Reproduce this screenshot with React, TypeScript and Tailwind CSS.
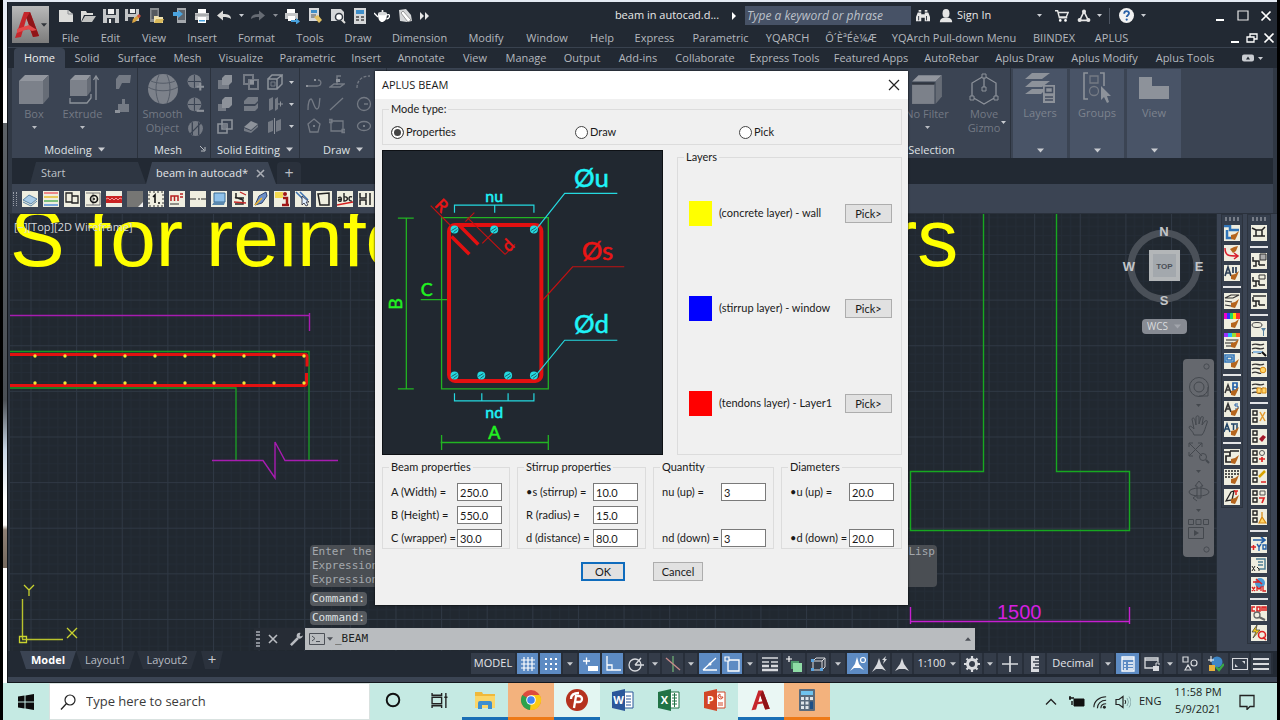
import React from "react";
import type { ReactNode } from "react";

const UI = "font-['Open_Sans','Noto_Sans',sans-serif]";
const FORM = "font-['Lato','Liberation_Sans',sans-serif]";

type Item = [string, string];

const menus: Item[] = [
  ["File", "w-[39px]"], ["Edit", "w-[41px]"], ["View", "w-[46px]"], ["Insert", "w-[50px]"],
  ["Format", "w-[59px]"], ["Tools", "w-[48px]"], ["Draw", "w-[48px]"], ["Dimension", "w-[75px]"],
  ["Modify", "w-[58px]"], ["Window", "w-[64px]"], ["Help", "w-[46px]"], ["Express", "w-[59px]"],
  ["Parametric", "w-[73px]"], ["YQARCH", "w-[61px]"], ["Ô´ÈªÉè¼Æ", "w-[66px]"],
  ["YQArch Pull-down Menu", "w-[140px]"], ["BIINDEX", "w-[60px]"], ["APLUS", "w-[55px]"],
];

const ribbonTabs: Item[] = [
  ["Home", "w-[51px]"], ["Solid", "w-[44px]"], ["Surface", "w-[56px]"], ["Mesh", "w-[45px]"],
  ["Visualize", "w-[62px]"], ["Parametric", "w-[71px]"], ["Insert", "w-[46px]"], ["Annotate", "w-[64px]"],
  ["View", "w-[44px]"], ["Manage", "w-[58px]"], ["Output", "w-[54px]"], ["Add-ins", "w-[58px]"],
  ["Collaborate", "w-[76px]"], ["Express Tools", "w-[83px]"], ["Featured Apps", "w-[90px]"],
  ["AutoRebar", "w-[71px]"], ["Aplus Draw", "w-[75px]"], ["Aplus Modify", "w-[85px]"], ["Aplus Tools", "w-[76px]"],
];

function Svg({ s = 16, vb = "0 0 16 16", children, className = "" }: { s?: number; vb?: string; children: ReactNode; className?: string }) {
  return (
    <svg width={s} height={s} viewBox={vb} fill="none" className={"shrink-0 " + className} aria-hidden="true">
      {children}
    </svg>
  );
}

function Tri({ className = "text-[#c9ccd1]", s = 6 }: { className?: string; s?: number }) {
  return (
    <svg width={s} height={s} viewBox="0 0 6 6" className={"shrink-0 " + className} aria-hidden="true">
      <path d="M0 1.2h6L3 4.8z" fill="currentColor" />
    </svg>
  );
}

function Cell({ w, label, children, className = "" }: { w: string; label: string; children: ReactNode; className?: string }) {
  return (
    <button type="button" aria-label={label} className={"flex h-full shrink-0 items-center justify-center " + w + " " + className}>
      {children}
    </button>
  );
}

const L = "#dcdcda";

const quick: [string, string, ReactNode][] = [
  ["New", "w-[22px]", <Svg><path d="M1 2h9l5 4v8H1z" fill={L} /><path d="M10 2v4h5" stroke="#8a8d92" /></Svg>],
  ["Open", "w-[22px]", <Svg><path d="M1 3h5l1 2h6v2H4L1 14z" fill={L} /><path d="M5 8h11l-4 6H1.500z" fill="#c2c3c2" /></Svg>],
  ["Save", "w-[23px]", <Svg><path d="M0 1h16v14H0z" fill="#c4c6c8" /><path d="M3 1h10v6H3zM4 10h8v5H4z" fill="#30363f" /><path d="M5 1h6v5H5zM6 11h2v4H6z" fill="#eee" /></Svg>],
  ["Save as", "w-[22px]", <Svg><path d="M0 1h14v12H0z" fill="#c4c6c8" /><path d="M3 1h8v5H3zM3 9h6v4H3z" fill="#30363f" /><path d="M5 1h5v4H5z" fill="#eee" /><path d="M7 15l1-4 5-4 2 2-5 5z" fill="#d9a441" /><path d="M12 8l2-2 2 2-2 2z" fill="#c94f3e" /></Svg>],
  ["Open from web", "w-[24px]", <Svg><path d="M2 0h9v14H2z" fill="#888c90" /><path d="M3.500 2h6v9h-6z" fill="#555a60" /><path d="M6 8h4l1 1h4v6H6z" fill="#f1e3b0" /><path d="M8 11h8l-2 4H6z" fill="#d9b95b" /></Svg>],
  ["Save to web", "w-[23px]", <Svg><path d="M5 0h9v15H5z" fill="#a4a8ad" /><path d="M6 2h7v10H6z" fill="#5f656d" /><path d="M1 2h5V0l5 4-5 4V6H1z" fill="#4aa3df" transform="translate(0 2)" /></Svg>],
  ["Plot", "w-[22px]", <Svg><path d="M4 1h8v4H4z" fill="#fff" /><path d="M1 5h14v7H1z" fill="#c5c7c9" /><path d="M4 9h8v6H4z" fill="#fff" /><path d="M5 12h6v1.500H5z" fill="#4aa3df" /><path d="M1 7h14" stroke="#8c8f93" /></Svg>],
  ["Undo", "w-[22px]", <Svg><path d="M1 7.500l6-5V6c5 0 8 1 8 5-2-1.500-4-2-8-2v3.500z" fill={L} /></Svg>],
  ["Undo list", "w-[12px]", <Tri s={5} />],
  ["Redo", "w-[22px]", <Svg><path d="M15 7.500l-6-5V6c-5 0-8 1-8 5 2-1.500 4-2 8-2v3.500z" fill="#666b73" /></Svg>],
  ["Redo list", "w-[12px]", <Tri s={5} className="text-[#8a8e95]" />],
  ["Batch plot", "w-[22px]", <Svg><path d="M3 1h8v4H3z" fill="#fff" /><path d="M1 5h13v6H1z" fill="#c5c7c9" /><path d="M4 8h7v5H4z" fill="#fff" /><path d="M7 12h5v-2l4 3.500-4 3V14H7z" fill="#4aa3df" /></Svg>],
  ["Match properties", "w-[23px]", <Svg><path d="M2 0h10v13H2z" fill="#d5d7d9" /><path d="M4 2h6v3H4z" fill="#3f8ec9" /><path d="M4 7h5M4 9h5" stroke="#555" /><path d="M7 9l4-2 4 5-3 3z" fill="#e2c063" /></Svg>],
  ["Preview", "w-[23px]", <Svg><path d="M1 1h10l3 3v9H1z" fill="#d5d7d9" /><circle cx="9" cy="9" r="3.500" fill="#fff" stroke="#333a44" strokeWidth="1.500" /><path d="M12 12l3 3" stroke={L} strokeWidth="2" /></Svg>],
  ["Sheet set", "w-[22px]", <Svg><path d="M2 0h12v16H2z" fill="#d5d7d9" /><path d="M4 2h8v4H4z" fill="#3f8ec9" /><path d="M4 9h3M9 9h3M4 12h3M9 12h3" stroke="#444" strokeWidth="1.500" /></Svg>],
  ["Render", "w-[22px]", <Svg><path d="M4 6c0 6 2 8 4 8s5-2 5-8z" fill="#fff" /><ellipse cx="8.500" cy="5.500" rx="4.500" ry="1.800" fill="#d5d7d9" /><path d="M4 9L0 5M12.500 7c4-2 4 3 0 4" stroke="#fff" strokeWidth="1.300" /><circle cx="8.500" cy="3" r="1" fill="#fff" /></Svg>],
  ["Script", "w-[23px]", <Svg><path d="M2 2l7-1 5 6 1 6-5 1-7-1z" fill="#d5d7d9" /><path d="M6 3l8 9-3 2-7-9z" fill="#fff" stroke="#777" strokeWidth=".7" /></Svg>],
  ["More", "w-[17px]", <Svg s={10} vb="0 0 10 10"><path d="M0 1l4 4-4 4zM5 1l4 4-4 4z" fill="#e6e6e6" /></Svg>],
];

function WinControls({ small = false }: { small?: boolean }) {
  const w = small ? "w-[17px]" : "w-[23px]";
  return (
    <>
      <Cell w={w} label="Minimize"><Svg s={12} vb="0 0 12 12"><path d="M2 10h8" stroke="#fff" strokeWidth="2" /></Svg></Cell>
      <Cell w={w} label="Restore">
        <Svg s={12} vb="0 0 12 12">
          {small ? <path d="M1 5h7v5H1zM4 5V2h7v5H8" stroke="#fff" strokeWidth="1.300" /> : <path d="M1 1h10v9H1z" stroke="#e6e6e6" strokeWidth="1.200" />}
        </Svg>
      </Cell>
      <Cell w={w} label="Close"><Svg s={12} vb="0 0 12 12"><path d="M1.500 1.500l9 9m0-9l-9 9" stroke="#fff" strokeWidth="1.700" /></Svg></Cell>
    </>
  );
}

function Header() {
  return (
    <header className="flex h-[46px] border-b border-[#39424f] bg-[#222933]">
      <button type="button" aria-label="Application menu" className="mt-1 ml-1 flex h-[37px] w-[37px] shrink-0 items-center justify-between bg-linear-to-b from-[#b9b9b9] to-[#7c7c7c] pr-0.5 pl-0.5">
        <svg width="27" height="30" viewBox="0 0 27 30" aria-hidden="true">
          <path d="M10 2h6l9 24-6 1-3-8-7 1-2 7-6 1z" fill="#c5262b" />
          <path d="M12.500 8l3 8-5.500 1z" fill="#a5a5a5" />
          <path d="M16 2l9 24-6 1L12.500 8z" fill="#8f1418" />
          <path d="M3 19l12-4 8 5-5 1-4-2-11 4z" fill="#e4494a" />
        </svg>
        <Tri className="text-[#30343a]" />
      </button>
      <div className="flex min-w-0 flex-1 flex-col pl-0.5">
        <div className="flex h-[26px] items-center pt-px pl-1">
          {quick.map(([label, w, icon]) => <Cell key={label} w={w} label={label}>{icon}</Cell>)}
          <div className="flex-1" />
          <h1 className="w-[112px] text-center text-[11px] whitespace-nowrap text-[#e8e8e8]">beam in autocad.d...</h1>
          <Cell w="w-[22px]" label="Expand"><Svg s={8} vb="0 0 8 8"><path d="M2 0l4 4-4 4z" fill="#fff" /></Svg></Cell>
          <input aria-label="Search help" placeholder="Type a keyword or phrase" className="h-[19px] w-[166px] bg-[#475266] px-0.5 text-[12px] text-white italic outline-none placeholder:text-[#bcc1c9]" />
          <Cell w="w-[24px]" label="Find"><Svg s={14}><path d="M2 4h4v10H0V9zM10 4h4l2 5v5h-6zM6 6h4v4H6zM3 1h3v2H3zM10 1h3v2h-3z" fill="#e6e6e6" /><path d="M3 8v5M12 8v5" stroke="#222933" /></Svg></Cell>
          <button type="button" className="flex w-[96px] items-center gap-1 pl-1 text-[11px] text-[#e8e8e8]">
            <Svg s={14}><ellipse cx="8" cy="5" rx="4" ry="5" fill="#e6e6e6" /><path d="M1 15c0-4 3-5 5-5h4c2 0 5 1 5 5z" fill="#e6e6e6" /></Svg>
            Sign In
          </button>
          <Cell w="w-[16px]" label="Account menu"><Tri s={5} /></Cell>
          <div className="w-1" />
          <Cell w="w-[22px]" label="Store"><Svg s={14}><path d="M0 2h3l2 8h9M4 4h11l-2 5H5" stroke="#e6e6e6" strokeWidth="1.600" /><circle cx="6" cy="13" r="1.500" fill="#fff" /><circle cx="12" cy="13" r="1.500" fill="#fff" /></Svg></Cell>
          <Cell w="w-[22px]" label="Autodesk apps"><Svg s={14}><path d="M8 3L3 13h10z" stroke="#e6e6e6" strokeWidth="1.800" /><circle cx="8" cy="3" r="2.300" fill="#e6e6e6" /><circle cx="3" cy="12.500" r="2.300" fill="#e6e6e6" /><circle cx="13" cy="12.500" r="2.300" fill="#e6e6e6" /></Svg></Cell>
          <Cell w="w-[8px]" label="Apps menu"><Tri s={5} /></Cell>
          <div className="mr-1 ml-1.5 h-4 w-px bg-[#4c5461]" />
          <Cell w="w-[24px]" label="Help"><Svg s={15}><circle cx="8" cy="8" r="8" fill="#f2f2f2" /><path d="M5.500 6c0-3.500 5.200-3.300 5.200-.3 0 2-2.500 2-2.500 4" stroke="#2a61a8" strokeWidth="1.900" /><circle cx="8.200" cy="12.300" r="1.200" fill="#2a61a8" /></Svg></Cell>
          <Cell w="w-[11px]" label="Help menu"><Tri s={5} /></Cell>
          <div className="w-[59px]" />
          <WinControls />
        </div>
        <nav className="flex h-[19px] items-center">
          {menus.map(([m, w]) => (
            <button key={m} type="button" className={"shrink-0 text-center text-[11px] leading-[18px] whitespace-nowrap text-[#b4b8be] " + w}>{m}</button>
          ))}
          <div className="flex-1" />
          <WinControls small />
        </nav>
      </div>
    </header>
  );
}

const G = "#747a84";
const D = "#8d929a";

const solidIcons: ReactNode[] = [
  <><path d="M1 6h6v4h5v5H1z" fill={G} /><path d="M5 4l3-3h7v7l-3 3H5z" fill={D} /></>,
  <><path d="M1 1h9v9H1zM6 6h9v9H6z" stroke={G} strokeWidth="2" /><path d="M7 6h4v4H7z" fill={D} /></>,
  <><path d="M1 5h9v10H1zM1 5l4-4h10l-5 4M15 1v9l-5 5" stroke={D} strokeWidth="1.500" /><path d="M4 8h4v4H4z" stroke={G} /></>,
  <><path d="M1 8h8v7H1z" fill={G} /><path d="M5 4l3-3h7v8l-3 3H5z" fill={D} /></>,
  <><path d="M1 5l4-4h10v4l-3 3H1zM1 10h11l3-3v5l-3 3H1z" fill={G} /></>,
  <><path d="M2 3l4-2v12l-4 2zM8 3l3-2v12l-3 2z" fill={G} /><path d="M11 8h5M13.500 5.500v5" stroke={D} /></>,
  <><path d="M1 6h9v9H1zM5 2h10v9H5z" stroke={D} strokeWidth="1.600" /><path d="M6 6h4v4H6z" fill={G} /></>,
  <><path d="M1 9l7-6 7 3-7 6z" fill={D} /><path d="M1 10v3l7 2 7-6V7l-7 6z" fill={G} /></>,
  <><path d="M1 4l5-2v11l-5 2zM9 3l5-2v11l-5 2z" fill={G} /><path d="M7.500 0v16" stroke={D} /></>,
];

const drawIcons: ReactNode[] = [
  <><path d="M1 12h10c5 0 5-6 1-6" stroke={G} strokeWidth="1.300" /><path d="M0 11h2v2H0zM8 5h2v2H8z" fill={D} /></>,
  <><path d="M1 13l4-3h10l-4 3zM8 11V2h4" stroke={G} strokeWidth="1.500" /><path d="M7 5h4v3H7z" fill={D} /></>,
  <path d="M1 14C1 6 6 2 14 2" stroke={G} strokeWidth="1.300" strokeDasharray="3 1.500" />,
  <path d="M2 14C2 8 3 3 5 3s3 10 6 10 2-7 3-11" stroke={G} strokeWidth="1.300" />,
  <path d="M1 14L14 2" stroke={G} strokeWidth="1.300" />,
  <><circle cx="8" cy="8" r="6.500" stroke={G} strokeWidth="1.300" /><path d="M8 8h4" stroke={D} /></>,
  <><path d="M8 1l6 5-2 8H4L2 6z" stroke={G} strokeWidth="1.300" /><circle cx="8" cy="8" r="1" fill={D} /></>,
  <path d="M2 3h12v10H2zM0 1.500h3v3H0zM13 11.500h3v3h-3z" stroke={G} strokeWidth="1.300" />,
  <><ellipse cx="8" cy="8" rx="6.500" ry="4.500" stroke={G} strokeWidth="1.300" /><circle cx="8" cy="8" r="1" fill={D} /></>,
];

function Panel({ title, w, arrow = true, mark = false, children }: { title: string; w: string; arrow?: boolean; mark?: boolean; children: ReactNode }) {
  return (
    <section className={"relative flex h-full shrink-0 flex-col border-r border-[#2b323d] " + w}>
      <div className="flex min-h-0 flex-1 items-start">{children}</div>
      <h2 className={"flex h-[17px] items-center justify-center gap-1.5 text-[11px] leading-[15px] whitespace-nowrap text-[#dfe1e4] " + (mark ? "pr-3" : "")}>
        {title}{arrow && <Tri s={7} />}
      </h2>
      {mark && <Svg s={6} vb="0 0 6 6" className="absolute right-1 bottom-1.5"><path d="M0 0l4 4M5 1v4H1" stroke="#b9bcc2" /></Svg>}
    </section>
  );
}

function BigTool({ label, w, icon, arrow = true }: { label: string; w: string; icon: ReactNode; arrow?: boolean }) {
  return (
    <button type="button" className={"flex shrink-0 flex-col items-center pt-[5px] text-[11px] leading-[14px] text-[#737984] " + w}>
      {icon}
      <span className="mt-0.5">{label}</span>
      {arrow && <Tri className="mt-1 text-[#b9bcc2]" s={5} />}
    </button>
  );
}

function Ribbon() {
  return (
    <>
      <nav className="flex h-5 items-center bg-[#222933] pl-1.5" role="tablist">
        {ribbonTabs.map(([t, w], i) => (
          <button key={t} type="button" role="tab" aria-selected={i === 0}
            className={"h-full shrink-0 text-center text-[11px] whitespace-nowrap " + w + (i === 0 ? " rounded-t-sm bg-[#3b4453] text-[#f0f0f0]" : " text-[#b4b8be]")}>
            {t}
          </button>
        ))}
        <div className="flex-1" />
        <Cell w="w-[34px]" label="Ribbon options" className="mr-2 gap-1"><Svg s={12} vb="0 0 12 12"><rect y="2.500" width="12" height="7" rx="2" fill="#c9ccd1" /><path d="M4 7.500l2-3 2 3z" fill="#222933" /></Svg><Tri s={5} /></Cell>
      </nav>
      <div className="mr-1 ml-1 flex h-[90px] bg-[#3b4453]">
        <Panel title="Modeling" w="w-[126px]">
          <BigTool label="Box" w="w-[44px]" icon={<Svg s={32} vb="0 0 32 32"><path d="M1 8l6-6h24l-6 6z" fill="#92969e" /><path d="M1 8h24v23H1z" fill="#7c818a" /><path d="M25 8l6-6v22l-6 7z" fill="#666c76" /></Svg>} />
          <BigTool label="Extrude" w="w-[53px]" icon={<Svg s={32} vb="0 0 32 32"><path d="M3 7l5-5h16l-4 5z" fill="#92969e" /><path d="M3 7h17v16H3z" fill="#7c818a" /><path d="M20 7l4-5v16l-4 5z" fill="#666c76" /><path d="M3 25v5h17l4-5v-4M29 27V4M26.500 7L29 3l2.500 4" stroke={D} strokeWidth="1.300" /></Svg>} />
          <div className="flex flex-col gap-2 pt-1.5 pl-1.5">
            <Svg s={16}><path d="M1 5l3-4h12l-1 8h-8l-3 6H1z" fill={G} /></Svg>
            <Svg s={16}><path d="M3 6h11v8H3zM7 1h3v5H7z" fill={G} /><path d="M0 12h5v3H0z" fill={D} /></Svg>
          </div>
        </Panel>
        <Panel title="Mesh" w="w-[73px]" arrow={false} mark>
          <BigTool label="Smooth Object" w="w-[49px]" arrow={false} icon={<Svg s={32} vb="0 0 32 32"><circle cx="16" cy="16" r="15" fill="#7c818a" /><path d="M1 14c8 5 22 5 30 0M4 8c6 3 18 3 24 0M12 2c-4 8-4 20 0 28M20 2c4 8 4 20 0 28" stroke="#555c68" /></Svg>} />
          <div className="flex flex-col gap-1.5 pt-1.5">
            <Svg s={17}><circle cx="7" cy="7" r="6.500" fill={G} /><path d="M1 7h12M7 1v12" stroke="#3b4453" /><path d="M9 12h7M12.500 8.500v7" stroke={D} strokeWidth="2" /></Svg>
            <Svg s={17}><circle cx="7" cy="7" r="6.500" fill={G} /><path d="M1 7h12M7 1v12" stroke="#3b4453" /><path d="M9 13h7" stroke={D} strokeWidth="2" /></Svg>
            <Svg s={17}><circle cx="8" cy="8" r="7" fill={G} /><path d="M2 14L14 2M5 2v12M11 2v12" stroke="#3b4453" strokeWidth="1.300" /></Svg>
          </div>
        </Panel>
        <Panel title="Solid Editing" w="w-[89px]">
          <div className="grid grid-cols-[26px_24px_22px_10px] items-center gap-y-1.5 pt-1.5 pl-1.5">
            {[0, 1, 2].map((r) => (
              <React.Fragment key={r}>
                {[0, 1, 2].map((c) => <Svg key={c} s={16}>{solidIcons[r * 3 + c]}</Svg>)}
                <Tri s={5} />
              </React.Fragment>
            ))}
          </div>
        </Panel>
        <Panel title="Draw" w="w-[87px]">
          <div className="grid grid-cols-[23px_27px_22px] items-center gap-y-1.5 pt-1.5 pl-1.5">
            {drawIcons.map((d, i) => <Svg key={i} s={16}>{d}</Svg>)}
          </div>
        </Panel>
        <div className="flex-1" />
        <Panel title="Selection" w="w-[158px]" arrow={false}>
          <div className="w-[48px]" />
          <BigTool label="No Filter" w="w-[52px]" icon={<Svg s={32} vb="0 0 30 30"><path d="M1 8l6-6h22l-6 6z" fill="#92969e" /><path d="M1 10h21v19H1z" fill="#7c818a" /><path d="M23 8l6-6v20l-6 7z" fill="#666c76" /><path d="M1 10h21" stroke="#30363f" strokeWidth="2" /></Svg>} />
          <BigTool label="Move Gizmo" w="w-[46px] ml-2" arrow={false} icon={<Svg s={32} vb="0 0 32 32"><path d="M16 3l12 7v14l-12 7-12-7V10zM16 3v13" stroke={D} strokeWidth="1.300" /><path d="M14 1h4v4h-4zM2 23h4v4H2zM26 23h4v4h-4zM14 14h4v4h-4z" fill="#3b4453" stroke={D} /></Svg>} />
          <Tri s={5} className="absolute top-[52px] right-1 text-[#c9ccd1]" />
        </Panel>
        <div className="flex gap-[3px] pt-px pr-px pl-0.5">
          <FlatPanel label="Layers" icon={<Svg s={32} vb="0 0 32 32"><path d="M8 1h18l-8 6H1zM8 9h18l-8 6H1zM8 17h14l-5 5H1z" fill={D} /><path d="M19 13h12v18H19z" fill="#8d929a" /><path d="M21.500 15.500h7v5h-7zM21 25h8M21 28h8" stroke="#444e60" strokeWidth="1.500" /></Svg>} />
          <FlatPanel label="Groups" icon={<Svg s={32} vb="0 0 32 32"><path d="M7 1H3v26h4M19 1h4v13" stroke={D} strokeWidth="1.600" /><path d="M9 4h8v7H9z" stroke={G} strokeWidth="1.300" /><circle cx="13" cy="19" r="4.500" stroke={G} strokeWidth="1.300" /><path d="M20 14v14l3-3 3 6 2-1-2-6h4z" fill={D} /></Svg>} />
          <FlatPanel label="View" icon={<Svg s={32} vb="0 0 32 32"><path d="M1 5h13v9h17v13H1z" fill={D} /></Svg>} />
        </div>
        <div className="w-[91px]" />
      </div>
    </>
  );
}

function FlatPanel({ label, icon }: { label: string; icon: ReactNode }) {
  return (
    <button type="button" className="flex w-[54px] flex-col items-center bg-[#495467] pt-[3px] text-[11px] leading-[14px] text-[#7d838e]">
      {icon}
      <span className="mt-0.5">{label}</span>
      <Tri className="mt-auto mb-1 text-[#c9ccd1]" s={7} />
    </button>
  );
}

const toolbarIcons: ReactNode[] = [
  <><path d="M1 9l6-5 8 4-6 5z" fill="#a9cbe6" stroke="#5d86a8" /><path d="M1 11l8 4 6-5" stroke="#5d86a8" /></>,
  <><path d="M1 2h14" stroke="#e88" strokeWidth="2" /><path d="M1 6h14" stroke="#e8c95a" strokeWidth="2" /><path d="M1 10h14" stroke="#7cc17c" strokeWidth="2" /><path d="M1 14h14" stroke="#79a7dc" strokeWidth="2" /></>,
  <><path d="M2 2h6v9H2zM8 5h6v7H8z" stroke="#222" strokeWidth="1.300" /></>,
  <><path d="M1 2h7v12M8 2h7v12H1" stroke="#777" /><circle cx="9" cy="8" r="3.500" stroke="#111" strokeWidth="1.600" /><circle cx="9" cy="8" r="1" fill="#111" /></>,
  <><path d="M0 5h16v7H0z" fill="#c92323" /><path d="M0 8l2-1 2 2 2-2 2 2 2-2 2 2 2-2 2 1" stroke="#f19a9a" /></>,
  <><path d="M0 0h16v16H0z" fill="#767674" /><path d="M11 16l5-5v5z" fill="#eee" /></>,
  <><path d="M1 1h14v14H1z" stroke="#333" strokeDasharray="2 2" /><path d="M5 6l2-2v8M10 12h2" stroke="#111" strokeWidth="1.600" /></>,
  <><path d="M2 10V5h7v5M5.500 5v5M11 3h3M11 6h3" stroke="#b62020" strokeWidth="1.500" /><path d="M1 13h9" stroke="#333" /></>,
  <path d="M0 8h6M8 8h2M11 8h5" stroke="#222" strokeWidth="1.200" />,
  <><path d="M3 2h11v9H3z" fill="#8fc1ea" stroke="#3b6c96" /><path d="M1 14l2-3h11l-1 3z" fill="#5a87ad" /></>,
  <><path d="M4 2v5h8M3 6l8 3v4H3" stroke="#222" strokeWidth="1.500" /><path d="M2 11l12 1M8 1l6 3" stroke="#c62828" strokeWidth="1.300" /></>,
  <><path d="M2 14L6 5l7-4 1 4-5 7z" fill="#6d8fc7" stroke="#2d4370" /><path d="M2 14l7-7" stroke="#f0b429" strokeWidth="1.600" /></>,
  <><path d="M1 1h8v6H1z" fill="#f3d84f" /><path d="M9 7h4v7M8 14h7" stroke="#a01515" strokeWidth="2.500" /><circle cx="11" cy="3" r="2" fill="#a01515" /></>,
  <><path d="M1 1l9 9M5 1l8 8" stroke="#3a6fb0" strokeWidth="1.500" /><path d="M7 5v9l2-2 2 3 2-1-2-3h3z" fill="#dfeeff" stroke="#223" strokeWidth=".8" /></>,
  <path d="M2 3l11-1v12H4z" stroke="#222" strokeWidth="1.500" />,
  <><path d="M1 7c3-2 4 0 3 3-3 1-4-2 0-2m3-6v8c5 0 4-5 0-4m8 0c-4-2-4 5 0 4" stroke="#222" strokeWidth="1.400" /><path d="M0 14l16-3" stroke="#d42020" strokeWidth="1.600" /></>,
  <path d="M2 2v5h6V2M2 14V9h6v5M12 2v12" stroke="#222" strokeWidth="1.500" />,
];

function Tile({ children }: { children: ReactNode }) {
  return (
    <svg width="16" height="16" viewBox="0 0 16 16" fill="none" className="shrink-0 bg-[#efeee0]" aria-hidden="true">{children}</svg>
  );
}

function DocumentBars() {
  return (
    <>
      <div className="mr-1 ml-1 flex h-[26px] items-end bg-[#222933] pl-[18px]">
        <button type="button" className="h-[22px] w-[116px] bg-[#2e3642] pl-[11px] text-left text-[11px] text-[#bfc3c9] [clip-path:polygon(6px_0,108px_0,116px_100%,0_100%)]">Start</button>
        <button type="button" className="flex h-[22px] w-[131px] items-center gap-2 bg-[#3b4453] pl-2.5 text-[11px] whitespace-nowrap text-[#e3e5e8] [clip-path:polygon(6px_0,122px_0,130px_100%,0_100%)]">
          beam in autocad*
          <Svg s={9} vb="0 0 9 9"><path d="M1 1l7 7m0-7L1 8" stroke="#a9adb4" strokeWidth="1.600" /></Svg>
        </button>
        <button type="button" className="h-[22px] w-[24px] rounded-t bg-[#2a313c] text-[16px] leading-5 text-[#b9bdc4]">+</button>
      </div>
      <div className="mr-1 ml-1 flex h-[29px] items-center gap-[5px] bg-[#3b4453] pl-px">
        <span className="h-3.5 w-1 border-x border-dotted border-[#9a9fa8]" />
        {toolbarIcons.map((d, i) => (
          <Tile key={i}>{d}</Tile>
        ))}
      </div>
    </>
  );
}

const bars = [35, 65, 95, 125, 155, 185, 214, 244, 274, 304];

function Drawing() {
  return (
    <svg className="absolute inset-0 h-full w-full" aria-hidden="true">
      <defs>
        <pattern id="grid" width="45.62" height="45.62" patternUnits="userSpaceOnUse" x="30.5" y="254">
          <path d="M9.100 0v46M18.200 0v46M27.300 0v46M36.400 0v46M0 9.100h46M0 18.200h46M0 27.300h46M0 36.400h46" stroke="#242c36" />
          <path d="M0.500 0v46M0 0.500h46" stroke="#2f3844" />
        </pattern>
      </defs>
      <g transform="translate(-10 -214)" fill="none">
        <rect x="0" y="200" width="3000" height="2000" fill="url(#grid)" />
        <text x="10" y="266" fontSize="82" fill="#ffff00" className="font-['Liberation_Sans',sans-serif]">S for reinfo</text>
        <text x="890" y="266" fontSize="82" fill="#ffff00" className="font-['Liberation_Sans',sans-serif]">rs</text>
        <text x="14" y="231" fontSize="11" fill="#d5d8dc" className="font-['Open_Sans',sans-serif]">[−][Top][2D Wireframe]</text>
        <path d="M10 315.500h299M309.500 313v18" stroke="#a71cb0" strokeWidth="1.400" />
        <path d="M10 351.500h299v108.500M10 388h226v72" stroke="#1c9a25" strokeWidth="1.400" />
        <path d="M10 354.500h295q2 0 2 2v10M306.500 373v10q0 2.500-2.500 2.500H10" stroke="#e31111" strokeWidth="3" />
        {bars.map((x) => <g key={x} fill="#f4e63a"><circle cx={x} cy="356" r="1.700" /><circle cx={x} cy="383" r="1.700" /></g>)}
        <path d="M212 460.500h51l12 17.500v-36l10 18.500h53" stroke="#a71cb0" strokeWidth="1.400" />
        <path d="M983.500 200v271.500h-73v59h219v-59h-73V200" stroke="#17a820" strokeWidth="1.400" />
        <path d="M910.500 607v17M1129.500 607v17M910 621.500h220" stroke="#c61fd0" strokeWidth="1.400" />
        <text x="997" y="619" fontSize="20" fill="#d61fe0" className="font-['Liberation_Sans',sans-serif]">1500</text>
        <path d="M22.500 639V599M22 639.500h41" stroke="#b9c22c" strokeWidth="1.400" />
        <path d="M19.500 636.500h7v6h-7zM24 585l5 5 5-5M29 590v6M67 628l10 10m0-10l-10 10" stroke="#c9d32f" strokeWidth="1.300" />
      </g>
    </svg>
  );
}

function ViewCube() {
  return (
    <div className="absolute top-[9px] right-[11px] flex flex-col items-center">
      <svg width="84" height="84" viewBox="0 0 84 84" aria-hidden="true" className="font-['Liberation_Sans',sans-serif]">
        <circle cx="42" cy="43" r="33" fill="none" stroke="#4a5058" strokeWidth="7" />
        <rect x="27" y="27" width="31" height="31" fill="#b3b6b8" />
        <rect x="31" y="31" width="23" height="23" fill="#a3a8ad" />
        <g fill="#c3c6c9" fontSize="13" fontWeight="bold" textAnchor="middle">
          <text x="42" y="13">N</text><text x="42" y="82">S</text><text x="7" y="48">W</text><text x="77" y="48">E</text>
        </g>
        <text x="42.500" y="46" fontSize="8" fontWeight="bold" fill="#4a4f57" textAnchor="middle">TOP</text>
      </svg>
      <button type="button" className="mt-3 flex h-[15px] w-[45px] items-center justify-center gap-1.5 rounded-sm bg-[#878b93] text-[10px] text-[#d9dbde]">
        WCS<Tri s={7} className="text-[#a2a5ac]" />
      </button>
    </div>
  );
}

function NavBar() {
  const k = "#44484e";
  return (
    <div className="absolute top-[145px] right-[3px] flex h-[198px] w-[31px] flex-col items-center justify-between rounded-sm bg-[#65686e] py-1">
      <Svg s={7} vb="0 0 8 8" className="mr-1 self-end"><circle cx="4" cy="4" r="3" stroke={k} /></Svg>
      <Svg s={22} vb="0 0 22 22"><circle cx="11" cy="11" r="9.500" stroke={k} /><circle cx="11" cy="11" r="5" stroke={k} /><path d="M11 20h9v-9" stroke={k} /></Svg>
      <Tri s={5} className="text-[#44484e]" />
      <Svg s={22} vb="0 0 22 22"><path d="M6 21c-1-4-5-6-5-8 1-2 3 0 5 2L4 5c1-2 2-1 3 1l1 5V3c1-2 3-1 3 0v7l2-7c2-1 3 0 2 2l-1 6 3-4c2-1 3 0 2 2-2 5-2 8-5 12z" stroke={k} /></Svg>
      <Svg s={22} vb="0 0 22 22"><path d="M1 1l13 13M14 1L1 14M1 5V1h4M10 1h4v4M1 10v4h4" stroke={k} /><circle cx="15" cy="15" r="3.500" stroke={k} /><path d="M18 18l3 3" stroke={k} strokeWidth="2" /></Svg>
      <Tri s={5} className="text-[#44484e]" />
      <Svg s={22} vb="0 0 22 22"><ellipse cx="11" cy="12" rx="10" ry="4" stroke={k} /><path d="M9 18V6H7l4-5 4 5h-2v12zM9 15l-4 3 4 3" stroke={k} /></Svg>
      <Tri s={5} className="text-[#44484e]" />
      <Svg s={22} vb="0 0 22 22"><path d="M0.500 1.500h5v5h-5zM8 1.500h5v5H8zM15.500 1.500h5v5h-5zM0.500 9.500h15v11h-15z" stroke={k} /><path d="M6 12l5 3-5 3z" fill={k} /></Svg>
      <Svg s={7} vb="0 0 8 8" className="mr-1 self-end"><circle cx="4" cy="4" r="3" stroke={k} /></Svg>
    </div>
  );
}

function CommandLine() {
  const line = "rounded-sm bg-[#55595e] px-0.5 text-[#dfe1e3]";
  return (
    <div className="absolute bottom-px left-[244px] flex w-[721px] flex-col font-['DejaVu_Sans_Mono',monospace] text-[11px]">
      <div className="mr-[38px] ml-[56px] flex flex-col items-start gap-[5px] leading-[14px]">
        <div className="flex w-full flex-col rounded-sm bg-[#4a4e53] px-0.5 text-[#a4a8ad]">
          <div className="flex justify-between"><span>Enter the</span><span>Lisp</span></div>
          <span>Expression</span>
          <span>Expression</span>
        </div>
        <span className={line}>Command:</span>
        <span className={line}>Command:</span>
      </div>
      <div className="mt-[3px] flex h-[22px] items-center">
        <div className="flex h-full w-[51px] items-center gap-2 bg-[#262c35] pl-0.5">
          <span className="h-4 w-1 border-x-2 border-dotted border-[#8a8f97]" />
          <button type="button" aria-label="Close command line"><Svg s={10} vb="0 0 10 10"><path d="M1 1l8 8m0-8L1 9" stroke="#b9bcc1" strokeWidth="1.600" /></Svg></button>
          <button type="button" aria-label="Customize" className="pl-1"><Svg s={14}><path d="M1 15L9 7" stroke="#b9bcc1" strokeWidth="3" /><path d="M15 4l-3 1-1-1 1-3C8 0 7 4 8 6s5 3 7-2z" fill="#b9bcc1" /></Svg></button>
        </div>
        <label className="flex h-full flex-1 items-center gap-0.5 bg-[#b9bcbf] px-1">
          <Svg s={16}><path d="M.5 2.500h15v11H.5z" stroke="#4c5057" /><path d="M3 5l3 2.500L3 10M7 10.500h4" stroke="#4c5057" /></Svg>
          <Tri s={6} className="text-[#4c5057]" />
          <input aria-label="Command" defaultValue="_BEAM" className="min-w-0 flex-1 bg-transparent text-[11px] text-[#1d1f22] outline-none" />
          <Tri s={6} className="rotate-180 text-[#4c5057]" />
        </label>
      </div>
    </div>
  );
}

const brush = <path d="M7 10l4-1 4-3-2 5-2 4-4-1z" fill="#b5651d" />;
const pal1: (ReactNode | null)[] = [
  <><path d="M0 1h6v4h9M3 5v8h5" stroke="#2f74b8" strokeWidth="2.500" />{brush}</>,
  <><path d="M6 4l4-2 4-1-2 5-3 2z" fill="#b5651d" /><path d="M1 3c0 8 4 8 12 8M10 8l4 3-4 3" stroke="#d81e2c" strokeWidth="1.500" /></>,
  <><path d="M1 11L4 2l3 9M2 8h4M9 2v6M12 2v6" stroke="#2a3d55" strokeWidth="1.700" />{brush}</>,
  null,
  <><path d="M1 5l6-3h8l-6 3zM1 8l7 1M1 12l6 1" stroke="#333" strokeWidth="1.200" />{brush}</>,
  <><path d="M0 0h3v6H0z" fill="#e0c" /><path d="M3 0h3v6H3z" fill="#33f" /><path d="M6 0h3v6H6z" fill="#2d6" /><path d="M9 0h3v6H9z" fill="#fd0" /><path d="M12 0h4v6h-4z" fill="#f33" />{brush}</>,
  <><path d="M0 0h4v4H0z" fill="#93f" /><path d="M4 0h4v4H4z" fill="#2bf" /><path d="M8 0h4v4H8z" fill="#9d3" /><path d="M12 0h4v4h-4z" fill="#f62" /><path d="M2 7h12M1 10h8M2 13h5" stroke="#222" />{brush}</>,
  <><path d="M1 9V2h9v7zM3 4h5v3H3z" stroke="#2f74b8" strokeWidth="1.600" />{brush}</>,
  null,
  <><path d="M1 12L4 4l3 8M2 9h4" stroke="#333" strokeWidth="1.500" /><path d="M9 2v7h4V6H9h4V2z" stroke="#2460a8" strokeWidth="1.700" />{brush}</>,
  <><path d="M1 11L4 3l3 8M2 8h4" stroke="#333" strokeWidth="1.700" /><path d="M14 3h-3v2h3v3h-3" stroke="#2460a8" />{brush}</>,
  <><path d="M0 11L3 3l3 8M1 8h4M7 3h5M9.500 3v6M13 2v7" stroke="#246" strokeWidth="1.500" />{brush}</>,
  null,
  <><path d="M0 3h6v4H2v6h5M6 2h9" stroke="#222" strokeWidth="1.700" />{brush}</>,
  <><path d="M1 2h14M1 5h14M1 8h8" stroke="#222" strokeDasharray="2 1" strokeWidth="1.300" />{brush}</>,
  <><path d="M2 12l5-9 3-1-2 9z" stroke="#222" strokeWidth="1.300" /><path d="M10 2h4M12 2v4" stroke="#d22" strokeWidth="1.500" />{brush}</>,
];

const box = <path d="M2 2h4v4H2zM2 9h4v4H2z" stroke="#222" strokeWidth="1.400" />;
const conn = <path d="M2 4v4h6v4M5 8v5H2M8 12h6" stroke="#222" strokeWidth="1.500" />;
const sheets = <path d="M1 4c5-3 7 2 12-1M1 8c5-3 7 2 12-1M1 12c5-3 7 2 9 0" stroke="#333" strokeWidth="1.400" />;
const pal2: (ReactNode | null)[] = [
  <><path d="M1 3l4 2h6l3-3M2 11h12M5 5v6h6V5" stroke="#222" strokeWidth="1.500" /></>,
  null,
  <>{conn}<path d="M9 1h6v6H9z" fill="#aaa" stroke="#333" /></>,
  <>{conn}<path d="M8 2h6v4H8z" stroke="#333" /></>,
  <>{conn}<path d="M2 3h13" stroke="#333" strokeWidth="1.500" /></>,
  null,
  <><ellipse cx="6" cy="4" rx="5" ry="2.500" stroke="#444" /><path d="M10 7h5l-2 3v5h-1v-5z" fill="#56819f" /></>,
  <>{sheets}<path d="M2 10h10v2H2z" fill="#8db9de" /><path d="M11 11l4 4" stroke="#111" strokeWidth="2" /></>,
  <>{sheets}<circle cx="12" cy="9" r="2.800" fill="#ffd56a" stroke="#d98a10" /></>,
  <>{sheets}<path d="M6 7h4v5H6zM11 7h4v5h-4z" fill="#ffd56a" stroke="#d98a10" /></>,
  null,
  <>{box}<path d="M9 3l5 9M14 3L9 12" stroke="#e39a2f" strokeWidth="1.500" /></>,
  <>{box}<path d="M8 10l4-4 3 2-4 5z" fill="#a3182a" /></>,
  <>{box}<circle cx="11" cy="4" r="2.500" stroke="#555" /><path d="M8 10h6M11 8v5" stroke="#d22" strokeWidth="1.700" /></>,
  <>{box}<path d="M8 8l6-6" stroke="#d9a400" strokeWidth="2.500" /><path d="M10 13h5" stroke="#d22" strokeWidth="1.500" /></>,
  <>{box}<path d="M9 2h5v4H9z" stroke="#555" /><path d="M8 9h5l-2 5" stroke="#d22" strokeWidth="1.700" /></>,
  <>{box}<path d="M11 3v6M8 14l3-6 4 6z" stroke="#d98a10" fill="#ffd56a" strokeWidth="1.200" /></>,
  null,
  <><path d="M2 3h12M10 0l4 3-4 3" stroke="#2460a8" strokeWidth="1.700" /><path d="M0 10h5M2.500 8v5" stroke="#d22" strokeWidth="1.500" /><path d="M6 7l2 3v4M10 7l-2 3M15 8h-3v4h3z" stroke="#2460a8" strokeWidth="1.400" /></>,
  <><path d="M5 2h9v10H8M7 5h5M7 8h5" stroke="#4e7d92" strokeWidth="1.500" /><path d="M1 9l3 5M4 9l-3 5M6 10l2 2v2" stroke="#222" /></>,
  <><circle cx="9" cy="6" r="5" fill="#4b9bd5" /><path d="M2 5h6M5 2l6 5" stroke="#d22" strokeWidth="1.600" /><path d="M1 10l3 4M4 10l-3 4M6 14v-4l2 2 2-2v4M12 9v5h3" stroke="#d22" strokeWidth="1.300" /></>,
  null,
  <><path d="M4 2H1v4h3M6 2h3v4H6zM11 6V2h4v4M13 2v4" stroke="#d22" strokeWidth="1.500" /><circle cx="6" cy="10" r="3" stroke="#666" strokeWidth="1.300" /><path d="M8 12l6 3" stroke="#666" strokeWidth="2" /></>,
  <><path d="M6 0L1 7h4l-3 6 7-8H5z" fill="#f4c81a" stroke="#333" strokeWidth=".7" /><circle cx="11" cy="10" r="3.500" stroke="#d22" strokeWidth="1.600" /><path d="M12 12l3 3" stroke="#d22" strokeWidth="1.600" /></>,
];

function Palette({ items, w }: { items: (ReactNode | null)[]; w: string }) {
  return (
    <div className={"flex flex-col items-center self-start border border-[#2c333e] bg-[#353e4c] " + w}>
      <span className="my-0.5 h-1 w-3.5 border-y-2 border-dotted border-[#777d87]" />
      {items.map((d, i) => d === null
        ? <span key={i} className="my-[3px] h-0.5 w-[18px] bg-[#e3e4e6]" />
        : <button key={i} type="button" aria-label={"Tool " + (i + 1)} className="flex h-5 items-center"><Tile>{d}</Tile></button>)}
    </div>
  );
}

const W = "#d8dade";
const statusCells: [string, string, boolean, ReactNode][] = [
  ["Model space", "w-[46px]", false, <span className="text-[11px] text-[#e4e6e9]">MODEL</span>],
  ["Grid", "w-[23px]", true, <Svg><path d="M4 1v14M8 1v14M12 1v14M1 4h14M1 8h14M1 12h14" stroke="#fff" strokeWidth="1.200" /></Svg>],
  ["Snap", "w-[23px]", true, <Svg><path d="M2 3h14M2 8h14M2 13h14" stroke="#fff" strokeWidth="2" strokeDasharray="2 3" /></Svg>],
  ["Snap menu", "w-[16px]", false, <Tri />],
  ["Dynamic input", "w-[23px]", true, <Svg><path d="M1 5h7M4.500 1.500v7" stroke="#fff" strokeWidth="1.300" /><path d="M6 10h10v5H6z" fill="#fff" /></Svg>],
  ["Ortho", "w-[23px]", true, <Svg><path d="M2 0v14h14M2 9h5v5" stroke="#fff" strokeWidth="1.300" /></Svg>],
  ["Polar", "w-[24px]", false, <Svg><circle cx="7" cy="9" r="6" stroke={W} strokeWidth="1.300" /><path d="M7 9h9M7 9l6-7" stroke={W} strokeWidth="1.300" /></Svg>],
  ["Polar menu", "w-[13px]", false, <Tri />],
  ["Isodraft", "w-[23px]", false, <Svg><path d="M8 0v16" stroke="#6fae74" strokeWidth="1.300" /><path d="M1 2l14 12" stroke="#c98b8b" strokeWidth="1.300" /></Svg>],
  ["Isodraft menu", "w-[14px]", false, <Tri />],
  ["Object tracking", "w-[23px]", true, <Svg><path d="M1 14h14M1 14L14 2" stroke="#fff" strokeWidth="1.300" /><circle cx="8" cy="8" r="1.500" fill="#fff" /></Svg>],
  ["Object snap", "w-[22px]", true, <Svg><path d="M4 4h11v11H4z" stroke="#fff" strokeWidth="1.300" /><path d="M1 1h4v4H1z" fill="#5d8bc3" stroke="#fff" strokeWidth="1.200" /></Svg>],
  ["Snap settings", "w-[14px]", false, <Tri />],
  ["Lineweight", "w-[25px]", false, <Svg><path d="M0 2h16M0 6h7M9 6h7" stroke={W} strokeWidth="1.500" /><path d="M0 10h7M9 10h7" stroke={W} strokeWidth="2.500" /><path d="M0 14h16" stroke={W} strokeWidth="2.500" /></Svg>],
  ["Selection cycling", "w-[24px]", false, <Svg><path d="M5 5h8v8H5z" fill="#4f9a6c" /><path d="M7 7h9v9H7z" fill="#8fdca6" /><path d="M0 3h6M3 0v6" stroke="#fff" strokeWidth="1.200" /></Svg>],
  ["3D object snap", "w-[24px]", false, <Svg><path d="M3 5h9v9H3zM3 5l3-3h9l-3 3M15 2v9l-3 3" stroke={W} /><path d="M1 3h3v3H1zM1 12h3v3H1zM10 12h3v3h-3z" fill="#5aa2dd" /></Svg>],
  ["3D snap menu", "w-[16px]", false, <Tri />],
  ["Annotation visibility", "w-[23px]", true, <Svg><path d="M7 1l2 7 5 6-4-2H4l-4 3 5-7z" fill="#fff" /><circle cx="13" cy="4" r="2.500" stroke="#fff" strokeWidth="1.200" /></Svg>],
  ["Auto scale", "w-[22px]", false, <Svg><path d="M7 2l2 6 5 7-4-2H4l-4 3 5-8z" fill={W} /><path d="M14 0l-4 4h2l-1 4 4-5h-2z" fill={W} /></Svg>],
  ["Annotation scale", "w-[22px]", false, <Svg><path d="M8 2l2 6 5 7-4-2H5l-4 2 5-7z" fill={W} /></Svg>],
  ["Scale list", "w-[47px]", false, <span className="flex items-center gap-1 text-[11px] text-[#e4e6e9]">1:100<Tri /></span>],
  ["Workspace", "w-[23px]", false, <Svg><circle cx="8" cy="8" r="4.500" stroke={W} strokeWidth="3" /><path d="M8 0v3M8 13v3M0 8h3M13 8h3M2.500 2.500l2 2M11.500 11.500l2 2M13.500 2.500l-2 2M2.500 13.500l2-2" stroke={W} strokeWidth="2.200" /></Svg>],
  ["Workspace menu", "w-[14px]", false, <Tri />],
  ["Annotation monitor", "w-[26px]", false, <Svg><path d="M8 0v16M0 8h16" stroke={W} strokeWidth="1.700" /></Svg>],
  ["Units", "w-[23px]", false, <Svg><path d="M4 0h8v16H4z" fill={W} /><path d="M8 3h4M6 6h6M8 9h4M6 12h6" stroke="#333b48" strokeWidth="1.300" /></Svg>],
  ["Unit format", "w-[54px]", false, <span className="text-[11px] text-[#e4e6e9]">Decimal</span>],
  ["Units menu", "w-[15px]", false, <Tri />],
  ["Quick properties", "w-[25px]", true, <Svg><path d="M2 1h12v14H2z" stroke="#fff" strokeWidth="1.300" /><path d="M2 3h12M4 7h2M4 10h2M4 13h2M8 7h5M8 10h5M8 13h5" stroke="#fff" strokeWidth="1.300" /></Svg>],
  ["Lock UI", "w-[23px]", false, <Svg><path d="M9 12H1V2h13v4M1 4h13" stroke={W} strokeWidth="1.300" /><path d="M9 10h6v5H9z" fill={W} /><path d="M12 10V7h3v2" stroke={W} /></Svg>],
  ["Lock menu", "w-[14px]", false, <Tri />],
  ["Isolate", "w-[25px]", false, <Svg><path d="M1 1h5v5H1zM3 14l3-5 3 5z" stroke={W} strokeWidth="1.200" /><circle cx="12" cy="7" r="3" stroke={W} strokeWidth="1.200" /></Svg>],
  ["Hardware acceleration", "w-[27px]", false, <Svg><circle cx="9" cy="6" r="5.500" fill="#3e86c6" /><path d="M0 4h6M3 0v6" stroke="#fff" /><path d="M1 9h6v6H1z" fill="#e8b23c" /><path d="M8 11l3 3 5-6" stroke="#39a845" strokeWidth="2.300" /></Svg>],
  ["Clean screen", "w-[21px]", false, <Svg><path d="M.5 2.500h15v11H.5z" stroke={W} strokeWidth="1.200" /><path d="M10 5h3v3zM6 11H3V8z" fill={W} /></Svg>],
  ["Customization", "w-[22px]", false, <Svg><path d="M0 3h16M0 8h16M0 13h16" stroke={W} strokeWidth="1.800" /></Svg>],
];

function StatusBar() {
  const tab = "h-[18px] shrink-0 text-[11px] ";
  return (
    <footer className="flex h-[26px] items-start bg-[#222933] pl-3">
      <button type="button" className={tab + "w-[56px] bg-[#3b4453] font-bold text-white [clip-path:polygon(0_0,100%_0,50px_100%,6px_100%)]"}>Model</button>
      <button type="button" className={tab + "w-[59px] bg-[#2b323d] text-[#b9bdc4] [clip-path:polygon(0_0,100%_0,53px_100%,6px_100%)]"}>Layout1</button>
      <button type="button" className={tab + "ml-0.5 w-[60px] bg-[#2b323d] text-[#b9bdc4] [clip-path:polygon(0_0,100%_0,54px_100%,6px_100%)]"}>Layout2</button>
      <button type="button" className={tab + "ml-1 w-[22px] bg-[#2b323d] text-[#c9ccd1] [clip-path:polygon(0_0,100%_0,18px_100%,4px_100%)]"}><span className="text-[15px] leading-4">+</span></button>
      <div className="ml-auto flex h-[23px] pt-0.5 pr-1">
        {statusCells.map(([label, w, on, icon]) => (
          <button key={label} type="button" aria-label={label}
            className={"flex h-[21px] shrink-0 items-center justify-center border-r-2 border-[#282f3a] " + w + (on ? " bg-[#5d8bc3]" : " bg-[#343c49]")}>
            {icon}
          </button>
        ))}
      </div>
    </footer>
  );
}

function Office({ c, d, letter }: { c: string; d: ReactNode; letter: string }) {
  return (
    <svg width="22" height="22" viewBox="0 0 22 22" aria-hidden="true">
      <path d="M11 3h10v16H11z" fill="#fff" stroke={c} />
      <g stroke={c} fill="none">{d}</g>
      <path d="M0 3l13-3v22L0 19z" fill={c} />
      <text x="6.500" y="15" fontSize="11" fontWeight="bold" textAnchor="middle" fill="#fff" className="font-['Open_Sans',sans-serif]">{letter}</text>
    </svg>
  );
}

const apps: [string, string, ReactNode][] = [
  ["Cortana", "", <Svg s={16}><circle cx="8" cy="8" r="6.300" stroke="#111" strokeWidth="1.900" /></Svg>],
  ["Task view", "", <Svg s={17}><path d="M1 1v2h9V1M1 5h9v6H1zM1 15v-2h9v2M14 1v14M12.500 5h3" stroke="#222" strokeWidth="1.300" /></Svg>],
  ["File Explorer", "border-b-[3px] border-[#1a6fb5]", <Svg s={22} vb="0 0 22 22"><path d="M1 3h7l1 2h12v13H1z" fill="#f0b93b" /><path d="M1 7h20v12H1z" fill="#fbd668" /><path d="M4 20v-6q0-2 2-2h10q2 0 2 2v6h-4v-4H8v4z" fill="#3d8fd0" /></Svg>],
  ["Chrome", "border-b-[3px] border-[#ee7a17] bg-[#f3b27d]", <Svg s={22} vb="0 0 22 22"><circle cx="11" cy="11" r="10" fill="#dd4b3e" /><path d="M11 11L2.300 6a10 10 0 0 0 7.700 15l5-8z" fill="#2ba24c" /><path d="M11 11l-1 10a10 10 0 0 0 9.700-15H11z" fill="#fbc916" /><circle cx="11" cy="11" r="4.800" fill="#fff" /><circle cx="11" cy="11" r="3.800" fill="#4285f4" /></Svg>],
  ["PicsArt", "border-b-[3px] border-[#1a6fb5] bg-[#e3f6f2]", <Svg s={24} vb="0 0 24 24"><circle cx="12" cy="12" r="11" fill="#b5321f" /><path d="M9 20l2-12h3a3 3 0 0 1 0 6h-3M6 11c0-5 4-6 8-6" stroke="#fff" strokeWidth="2.300" /></Svg>],
  ["Word", "", <Office c="#2b579a" letter="W" d={<path d="M14 7h5M14 10h5M14 13h5M14 16h5" />} />],
  ["Excel", "", <Office c="#217346" letter="X" d={<path d="M14 6h5M14 9h5M14 12h5M14 15h5M16.500 4v14" />} />],
  ["PowerPoint", "", <Office c="#d24726" letter="P" d={<path d="M14 14h5M14 16h5M19 8a2.500 2.500 0 1 1-3-3v3z" />} />],
  ["AutoCAD", "border-b-[3px] border-[#1a6fb5] bg-[#eaf7f4]", <Svg s={22} vb="0 0 27 29"><path d="M10 2h6l9 24-6 1-3-8-7 1-2 7-6 1z" fill="#c5262b" /><path d="M12.500 8l3 8-5.500 1z" fill="#fff" /><path d="M16 2l9 24-6 1L12.500 8z" fill="#8f1418" /></Svg>],
  ["Calculator", "border-b-[3px] border-[#ee7a17] bg-[#f3b27d]", <Svg s={22} vb="0 0 22 22"><rect x="3" y="0" width="16" height="22" rx="1" fill="#5a6b7c" /><path d="M5 2h12v4H5z" fill="#6fc3ee" /><path d="M5 8h3v3H5zM9.500 8h3v3h-3zM14 8h3v3h-3zM5 12.500h3v3H5zM9.500 12.500h3v3h-3zM5 17h3v3H5zM9.500 17h3v3h-3z" fill="#dfe5ea" /><path d="M14 12.500h3V20h-3z" fill="#1d4f86" /></Svg>],
];

function Taskbar() {
  return (
    <div className="flex h-[37px] items-stretch bg-[#c5eae3] text-[#1b1f22]">
      <button type="button" aria-label="Start menu" className="flex w-[46px] items-center justify-center">
        <Svg s={16}><path d="M0 2.500l6.500-1v6H0zM7.500 1.400L16 0v7.500H7.500zM0 8.500h6.500v6L0 13.500zM7.500 8.500H16V16l-8.500-1.400z" fill="#0c0c0c" /></Svg>
      </button>
      <label className="flex w-[321px] items-center gap-2.5 border border-[#d9e2e0] bg-white pl-2.5">
        <Svg s={16}><circle cx="10" cy="6" r="5" stroke="#222" strokeWidth="1.200" /><path d="M6.500 9.500L1 15.500" stroke="#222" strokeWidth="1.300" /></Svg>
        <input aria-label="Search" placeholder="Type here to search" className="w-full text-[13px] outline-none placeholder:text-[#3b3b3b]" />
      </label>
      {apps.map(([label, c, icon]) => (
        <button key={label} type="button" aria-label={label} className={"flex w-[46px] shrink-0 items-center justify-center " + (c || "border-b-[3px] border-transparent")}>{icon}</button>
      ))}
      <div className="ml-auto flex items-center text-[11px]">
        <button type="button" aria-label="Hidden icons" className="mr-1 w-[20px]"><Svg s={12} vb="0 0 12 12"><path d="M1 8.500l5-5 5 5" stroke="#222" strokeWidth="1.300" /></Svg></button>
        <Svg s={16} className="mr-2"><path d="M5 5h10v7H5z" fill="#111" stroke="#111" /><path d="M0 4h5M1 2v4M3 7v4" stroke="#111" strokeWidth="1.400" /></Svg>
        <Svg s={14} className="mr-2"><path d="M1 14C1 7 7 2 15 2M5 15C5 10 9 6 15 6M9 15c0-3 2-5 6-5" stroke="#222" strokeWidth="1.300" /><circle cx="13" cy="14" r="1.700" fill="#222" /></Svg>
        <Svg s={16} className="mr-2"><path d="M1 5.500h3l4-3v11l-4-3H1z" stroke="#222" strokeWidth="1.200" /><path d="M10 6q1.500 2 0 4" stroke="#222" /><path d="M12 4q3 4 0 8M14 2.500q4 5.500 0 11" stroke="#8aa" /></Svg>
        <span className="w-[32px]">ENG</span>
        <div className="flex w-[54px] flex-col items-center pb-1 leading-[17px] whitespace-nowrap"><time>11:58 PM</time><time>5/9/2021</time></div>
        <button type="button" aria-label="Notifications" className="mr-[22px] ml-3.5"><Svg s={16}><path d="M1 1.500h14v11h-4l-3 3v-3H1z" stroke="#222" strokeWidth="1.300" /></Svg></button>
      </div>
    </div>
  );
}

function BeamSketch() {
  const cy = "#25d9e0";
  const dots: [number, number][] = [[454, 229], [494, 229], [534, 229], [454, 376], [481, 376], [508, 376], [534, 376]];
  return (
    <svg width="281" height="305" viewBox="382 150 281 305" fill="none" className={"shrink-0 border border-[#0e1115] bg-[#212830] " + FORM} role="img" aria-label="Beam section">
      <path d="M441 217h107.500v172.500H441zM405.500 217v173M397 217.500h16M397 389.500h16M420 299.500h28M447.500 292v15M440 443.500h109M441 436v15M548.500 436v15" stroke="#22b422" strokeWidth="1.300" />
      <rect x="448.500" y="224.500" width="93" height="157" rx="6" stroke="#e31010" strokeWidth="4" />
      <path d="M451 236l18 18M459 225l19 19" stroke="#e31010" strokeWidth="3.500" />
      <path d="M430 205l24 24M467 217l38 37M474 212l-9 9M496 229l-14 14M543 300l30-33.500h52M505 254l10-10" stroke="#c01212" strokeWidth="1.200" />
      <path d="M454 212v-7.500h80v7.500M494.500 204v8M454 394v7.500h80V394M481.500 394v7M508 394v7M536 229l29-36.500h53M536 376l29-35.500h53" stroke={cy} strokeWidth="1.200" />
      {dots.map(([x, y]) => (
        <g key={x + "-" + y}><circle cx={x} cy={y} r="4" fill={cy} /><path d={`M${x - 3} ${y + 1}l5-3M${x - 1} ${y + 3}l4-3`} stroke="#17636b" /></g>
      ))}
      <g textAnchor="middle" fill="#1ff3f8" stroke="#1ff3f8" strokeWidth=".5">
        <text x="592" y="186" fontSize="26">Øu</text>
        <text x="592" y="333" fontSize="26">Ød</text>
        <text x="494" y="201" fontSize="16">nu</text>
        <text x="494" y="419" fontSize="16">nd</text>
      </g>
      <g textAnchor="middle" fill="#ea1515" stroke="#ea1515" strokeWidth=".5">
        <text x="598" y="260" fontSize="26">Øs</text>
        <text transform="translate(437 209) rotate(45)" fontSize="17">R</text>
        <text transform="translate(512 249) rotate(-45)" fontSize="17">d</text>
      </g>
      <g textAnchor="middle" fill="#21f321" stroke="#21f321" strokeWidth=".5">
        <text x="426" y="296" fontSize="18">C</text>
        <text x="494" y="440" fontSize="18">A</text>
        <text transform="translate(401 304) rotate(-90)" fontSize="18">B</text>
      </g>
    </svg>
  );
}

const groupCls = "border border-[#dcdcdc]";
const legendCls = "ml-1.5 px-0.5 leading-[14px]";

function Group({ title, w, gap, rows }: { title: string; w: string; gap: string; rows: [string, string][] }) {
  return (
    <fieldset className={groupCls + " h-[89px] shrink-0 " + w}>
      <legend className={legendCls}>{title}</legend>
      <div className={"flex flex-col pt-[9px] pr-[7px] pl-2 " + gap}>
        {rows.map(([label, value]) => (
          <label key={label} className="flex h-[18px] items-center justify-between whitespace-nowrap">
            {label}
            <input defaultValue={value} className="h-[18px] w-[45px] shrink-0 border border-[#7a7a7a] bg-white px-0.5 text-[11px] outline-none" />
          </label>
        ))}
      </div>
    </fieldset>
  );
}

const layers: [string, string][] = [
  ["(concrete layer) - wall", "bg-[#ffff00]"],
  ["(stirrup layer) - window", "bg-[#0000ff]"],
  ["(tendons layer) - Layer1", "bg-[#ff0000]"],
];

function BeamDialog() {
  const btn = "h-[19px] border bg-[#e1e1e1] leading-[15px]";
  return (
    <div role="dialog" aria-labelledby="dlg-title" className={"absolute top-[71px] left-[375px] z-10 flex w-[533px] flex-col bg-[#f0f0f0] text-[11px] text-[#1a1a1a] shadow-[0_0_2px_#000] " + FORM}>
      <div className="flex h-7 items-center justify-between bg-white pr-2 pl-[7px]">
        <h2 id="dlg-title" className={"text-[11px] " + UI}>APLUS BEAM</h2>
        <button type="button" aria-label="Close dialog"><Svg s={12} vb="0 0 12 12"><path d="M1 1l10 10m0-10L1 11" stroke="#222" strokeWidth="1.200" /></Svg></button>
      </div>
      <form className="flex flex-col pt-[3px] pr-1.5 pb-6 pl-[7px]" onSubmit={(e) => e.preventDefault()}>
        <fieldset className={groupCls + " h-[43px]"}>
          <legend className={legendCls}>Mode type:</legend>
          <div className="grid grid-cols-[184px_164px_1fr] pt-[9px] pl-2">
            {["Properties", "Draw", "Pick"].map((m, i) => (
              <label key={m} className="flex items-center gap-0.5 leading-[14px]">
                <input type="radio" name="mode" defaultChecked={i === 0} className="size-[13px] appearance-none rounded-full border border-[#444] bg-white checked:bg-[#444] checked:shadow-[inset_0_0_0_2px_#fff]" />
                {m}
              </label>
            ))}
          </div>
        </fieldset>
        <div className="mt-[5px] flex justify-between">
          <BeamSketch />
          <fieldset className={groupCls + " h-[305px] w-[225px]"}>
            <legend className={legendCls}>Layers</legend>
            <div className="flex flex-col gap-[70px] pt-[37px] pr-[9px] pl-[11px]">
              {layers.map(([name, c]) => (
                <div key={name} className="flex h-[25px] items-center">
                  <span className={"mr-[7px] h-[25px] w-[23px] " + c} />
                  <span className="flex-1 whitespace-nowrap">{name}</span>
                  <button type="button" className={btn + " w-[47px] border-[#adadad]"}>Pick&gt;</button>
                </div>
              ))}
            </div>
          </fieldset>
        </div>
        <div className="mt-[5px] flex justify-between">
          <Group title="Beam properties" w="w-[128px]" gap="gap-[5px]" rows={[["A (Width) =", "250.0"], ["B (Height) =", "550.0"], ["C (wrapper) =", "30.0"]]} />
          <Group title="Stirrup properties" w="w-[129px]" gap="gap-[5px]" rows={[["•s (stirrup) =", "10.0"], ["R (radius) =", "15.0"], ["d (distance) =", "80.0"]]} />
          <Group title="Quantity" w="w-[121px]" gap="gap-[28px]" rows={[["nu (up) =", "3"], ["nd (down) =", "3"]]} />
          <Group title="Diameters" w="w-[121px]" gap="gap-[28px]" rows={[["•u (up) =", "20.0"], ["•d (down) =", "20.0"]]} />
        </div>
        <div className="mt-[13px] flex gap-7 pl-[199px]">
          <button type="submit" className={btn + " w-[44px] border-2 border-[#0f6cbd]"}>OK</button>
          <button type="button" className={btn + " w-[50px] border-[#adadad]"}>Cancel</button>
        </div>
      </form>
    </div>
  );
}

export default function App() {
  return (
    <div className={"relative flex min-h-screen overflow-hidden bg-black px-[3px] " + UI}>
      <div className="flex min-w-0 flex-1 flex-col">
        <div className="flex flex-1 bg-[linear-gradient(#e3e9f2_0,#fff_100px,#fff_123px,#5c6166_123px,#4a4f55_400px,#c9d6e6_450px,#fff_500px,#fff_525px,#8d7f74_530px,#75695f_568px,#fff_568px)] pt-0.5 pl-1">
          <div className="flex min-w-0 flex-1 flex-col border-l border-[#12161c] bg-[#303844] ">
            <Header />
            <Ribbon />
            <DocumentBars />
            <main className="flex flex-1 border-t border-[#2a313c] pl-0.5">
              <div className="relative min-h-[437px] flex-1 overflow-hidden bg-[#212830]">
                <Drawing />
                <ViewCube />
                <NavBar />
                <CommandLine />
              </div>
              <aside className="flex w-[60px] gap-1 bg-[#3b4453] pl-1">
                <Palette items={pal1} w="w-[22px]" />
                <Palette items={pal2} w="w-[24px]" />
              </aside>
            </main>
            <StatusBar />
            <div className="h-1.5 border-b border-[#12161c] bg-[#3b4453]" />
          </div>
        </div>
        <Taskbar />
      </div>
      <BeamDialog />
    </div>
  );
}
